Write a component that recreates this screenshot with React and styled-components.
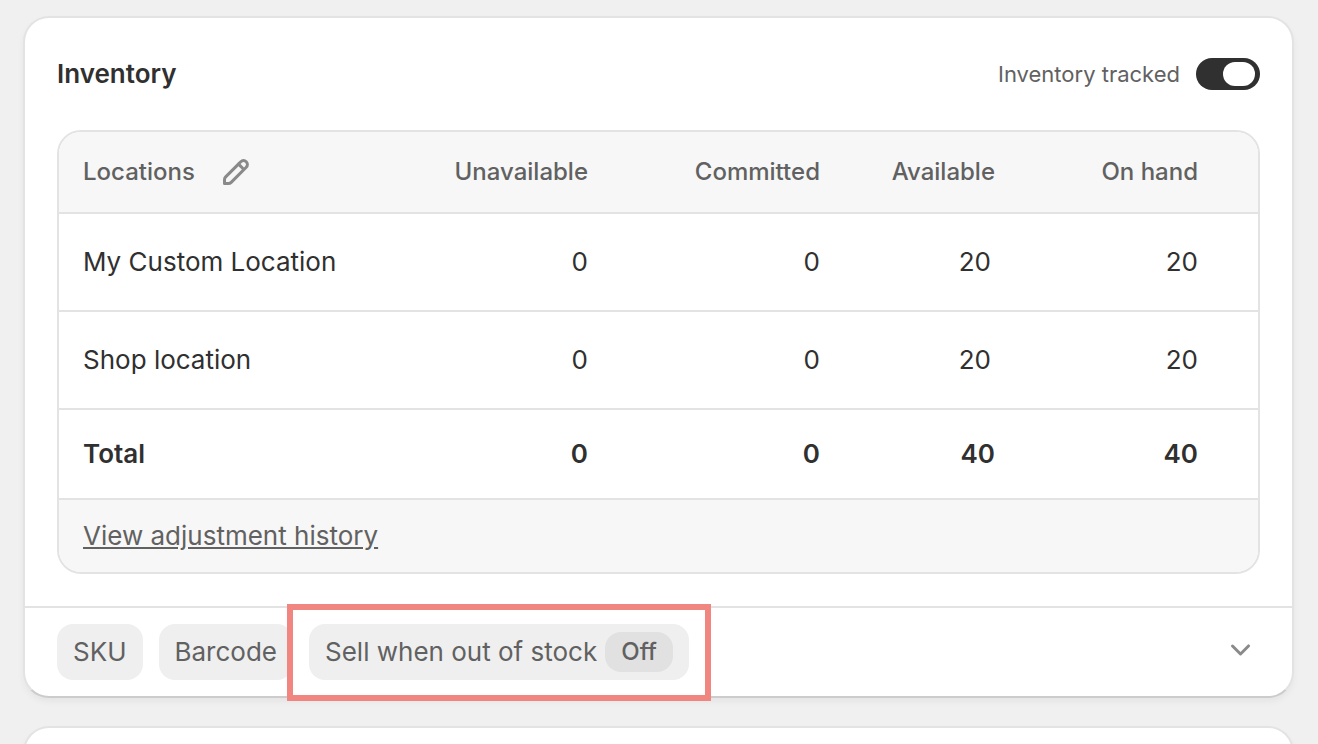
import React, { useState } from "react";
import styled, { createGlobalStyle } from "styled-components";

const color = {
  page: "#f0f0f0",
  card: "#ffffff",
  subdued: "#f7f7f7",
  line: "#e3e3e3",
  text: "#303030",
  textSoft: "#616161",
  icon: "#8a8a8a",
  chip: "#efefef",
  badge: "#e1e1e1",
  highlight: "#f1857f",
};

const GlobalStyle = createGlobalStyle`
  *, *::before, *::after { box-sizing: border-box; }
  html { scrollbar-width: none; }
  body {
    margin: 0;
    background: ${color.page};
    color: ${color.text};
    font-family: Inter, "Liberation Sans", sans-serif;
    font-size: 26px;
    line-height: 40px;
  }
  button, input { font: inherit; }
`;

const Page = styled.main`
  display: flex;
  flex-direction: column;
  gap: 28px;
  min-height: 100vh;
  padding: 16px 24px 0 23px;
`;

const Card = styled.section`
  background: ${color.card};
  border: 2px solid ${color.line};
  border-bottom-color: #cccccc;
  border-radius: 26px;
  box-shadow: 0 4px 8px -2px rgba(26, 26, 26, 0.07);
`;

const NextCard = styled(Card)`
  flex: 1;
  min-height: 120px;
  border-bottom: 0;
  border-radius: 26px 26px 0 0;
`;

const CardHeader = styled.header`
  display: flex;
  align-items: center;
  justify-content: space-between;
  padding: 36px 32px;
`;

const Title = styled.h2`
  margin: 0;
  font-size: 26px;
  font-weight: 600;
`;

const ToggleLabel = styled.label`
  display: flex;
  align-items: center;
  gap: 16px;
  color: ${color.textSoft};
  font-size: 22px;
`;

const Toggle = styled.input.attrs({ type: "checkbox", role: "switch" })`
  appearance: none;
  display: flex;
  justify-content: flex-start;
  width: 64px;
  height: 32px;
  margin: 0;
  padding: 4px 5px;
  border-radius: 16px;
  background: ${color.icon};
  cursor: pointer;

  &::before {
    content: "";
    width: 32px;
    height: 24px;
    border-radius: 12px;
    background: ${color.card};
  }

  &:checked {
    justify-content: flex-end;
    background: ${color.text};
  }
`;

const TableFrame = styled.div`
  margin: 0 32px 32px;
  border: 2px solid ${color.line};
  border-radius: 24px;
  overflow: hidden;
`;

const Table = styled.table`
  width: 100%;
  table-layout: fixed;
  border-collapse: separate;
  border-spacing: 0;
`;

const Col = styled.col`
  width: ${(p) => p.$width};
`;

const HeadCell = styled.th`
  height: 82px;
  padding: 0 24px;
  background: ${color.subdued};
  border-bottom: 2px solid ${color.line};
  color: ${color.textSoft};
  font-size: 24px;
  font-weight: 500;
  text-align: ${(p) => p.$align || "right"};

  &:last-child { padding-right: 60px; }
`;

const HeadGroup = styled.div`
  display: flex;
  align-items: center;
  gap: 21px;
`;

const RowName = styled.th`
  height: ${(p) => (p.$total ? "90px" : "98px")};
  padding: 0 24px;
  border-bottom: 2px solid ${color.line};
  font-weight: ${(p) => (p.$total ? 600 : 400)};
  text-align: left;
`;

const NumberCell = styled.td`
  padding: 0 ${(p) => (p.$editable ? "28px" : "24px")} 0 24px;
  border-bottom: 2px solid ${color.line};
  font-weight: ${(p) => (p.$total ? 600 : 400)};
  text-align: right;

  &:last-child { padding-right: 60px; }
`;

const TableFooter = styled.div`
  padding: 16px 24px;
  background: ${color.subdued};
`;

const HistoryLink = styled.a`
  color: ${color.textSoft};
  text-decoration: underline;
`;

const IconButton = styled.button`
  display: flex;
  padding: 0 0 ${(p) => (p.$raised ? "8px" : "0")};
  border: 0;
  background: none;
  color: ${color.icon};
  cursor: pointer;
`;

const Icon = styled.svg`
  width: 40px;
  height: 40px;
  fill: currentColor;
`;

const CardFooter = styled.footer`
  display: flex;
  align-items: center;
  justify-content: space-between;
  padding: 16px 32px;
  border-top: 2px solid ${color.line};
`;

const ChipList = styled.div`
  display: flex;
  gap: 16px;
`;

const Chip = styled.button`
  display: flex;
  align-items: center;
  gap: 8px;
  height: 56px;
  padding: 0 16px;
  border: 0;
  border-radius: 16px;
  background: ${color.chip};
  color: ${color.textSoft};
  white-space: nowrap;
  cursor: pointer;
`;

const Badge = styled.span`
  padding: 0 16px;
  border-radius: 16px;
  background: ${color.badge};
  font-size: 24px;
  font-weight: 500;
`;

const Highlight = styled.div`
  position: relative;

  &::after {
    content: "";
    position: absolute;
    inset: -20px -22px -21px;
    border: 6px solid ${color.highlight};
    pointer-events: none;
  }
`;

const rows = [
  { name: "My Custom Location", values: [0, 0, 20, 20] },
  { name: "Shop location", values: [0, 0, 20, 20] },
  { name: "Total", values: [0, 0, 40, 40], total: true },
];

const headings = ["Unavailable", "Committed", "Available", "On hand"];

function EditIcon() {
  return (
    <Icon viewBox="0 0 20 20" aria-hidden="true">
      <path
        fillRule="evenodd"
        d="M15.655 4.344a2.695 2.695 0 0 0-3.81 0l-.599.599-.009-.009-1.06 1.06.008.01-5.88 5.88a2.75 2.75 0 0 0-.805 1.944v1.922a.75.75 0 0 0 .75.75h1.922a2.75 2.75 0 0 0 1.944-.806l7.54-7.539a2.695 2.695 0 0 0 0-3.81Zm-4.409 2.72 1.69 1.69-5.88 5.88a1.25 1.25 0 0 1-.884.366h-1.172v-1.172c0-.331.132-.65.366-.884l5.88-5.88Zm2.75.629.599-.599a1.195 1.195 0 1 0-1.69-1.689l-.598.599 1.69 1.689Z"
      />
    </Icon>
  );
}

function ChevronDownIcon() {
  return (
    <Icon viewBox="0 0 20 20" aria-hidden="true">
      <path
        fillRule="evenodd"
        d="M5.72 8.47a.75.75 0 0 1 1.06 0l3.47 3.47 3.47-3.47a.75.75 0 1 1 1.06 1.06l-4 4a.75.75 0 0 1-1.06 0l-4-4a.75.75 0 0 1 0-1.06Z"
      />
    </Icon>
  );
}

export default function App() {
  const [tracked, setTracked] = useState(true);

  return (
    <>
      <GlobalStyle />
      <Page>
        <Card aria-labelledby="inventory-title">
          <CardHeader>
            <Title id="inventory-title">Inventory</Title>
            <ToggleLabel htmlFor="tracked">
              Inventory tracked
              <Toggle
                id="tracked"
                checked={tracked}
                onChange={(e) => setTracked(e.target.checked)}
              />
            </ToggleLabel>
          </CardHeader>

          <TableFrame>
            <Table>
              <colgroup>
                <Col $width="auto" />
                <Col $width="232px" />
                <Col $width="232px" />
                <Col $width="175px" />
                <Col $width="239px" />
              </colgroup>
              <thead>
                <tr>
                  <HeadCell scope="col" $align="left">
                    <HeadGroup>
                      Locations
                      <IconButton type="button" aria-label="Edit locations">
                        <EditIcon />
                      </IconButton>
                    </HeadGroup>
                  </HeadCell>
                  {headings.map((h) => (
                    <HeadCell key={h} scope="col">{h}</HeadCell>
                  ))}
                </tr>
              </thead>
              <tbody>
                {rows.map((row) => (
                  <tr key={row.name}>
                    <RowName scope="row" $total={row.total}>{row.name}</RowName>
                    {row.values.map((v, i) => (
                      <NumberCell
                        key={headings[i]}
                        $total={row.total}
                        $editable={!row.total && headings[i] === "Available"}
                      >
                        {v}
                      </NumberCell>
                    ))}
                  </tr>
                ))}
              </tbody>
            </Table>
            <TableFooter>
              <HistoryLink href="#history">View adjustment history</HistoryLink>
            </TableFooter>
          </TableFrame>

          <CardFooter>
            <ChipList>
              <Chip type="button">SKU</Chip>
              <Chip type="button">Barcode</Chip>
              <Highlight>
                <Chip type="button">
                  Sell when out of stock
                  <Badge>Off</Badge>
                </Chip>
              </Highlight>
            </ChipList>
            <IconButton type="button" $raised aria-label="Show more inventory fields">
              <ChevronDownIcon />
            </IconButton>
          </CardFooter>
        </Card>
        <NextCard aria-label="Next section" />
      </Page>
    </>
  );
}
